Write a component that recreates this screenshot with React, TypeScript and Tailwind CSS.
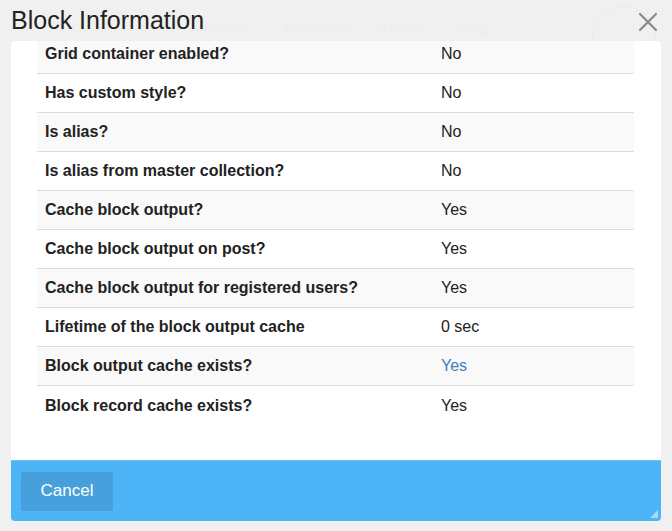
type Row = { label: string; value: string; link?: boolean };

const rows: Row[] = [
  { label: "Grid container enabled?", value: "No" },
  { label: "Has custom style?", value: "No" },
  { label: "Is alias?", value: "No" },
  { label: "Is alias from master collection?", value: "No" },
  { label: "Cache block output?", value: "Yes" },
  { label: "Cache block output on post?", value: "Yes" },
  { label: "Cache block output for registered users?", value: "Yes" },
  { label: "Lifetime of the block output cache", value: "0 sec" },
  { label: "Block output cache exists?", value: "Yes", link: true },
  { label: "Block record cache exists?", value: "Yes" },
];

export default function App() {
  return (
    <div
      className="relative w-[672px] h-[531px] overflow-hidden bg-[#f0f0f0] text-[#222]"
      style={{ fontFamily: '"Liberation Sans", Arial, sans-serif' }}
    >
      {/* faint page behind the dialog */}
      <div
        className="absolute top-[16px] left-0 w-full text-[15px] font-bold text-[#eceef1]"
        style={{ fontFamily: '"Open Sans", sans-serif' }}
      >
        <span className="absolute left-[186px]">Services</span>
        <span className="absolute left-[283px]">Portfolio</span>
        <span className="absolute left-[380px]">Team</span>
        <span className="absolute left-[455px]">Blog</span>
      </div>
      <div className="absolute left-[592px] top-[6px] w-[64px] h-[64px] rounded-full border border-[#ececec]" />

      <div className="relative flex flex-col h-full px-[11px] pb-[10px]">
        <div className="h-[41px] flex items-start justify-between">
          <h1 className="text-[25px] leading-none mt-[8px] text-[#222]">Block Information</h1>
          <svg className="mt-[13px] mr-[4px]" width="18" height="18" viewBox="0 0 18 18">
            <path d="M1 1 L17 17 M17 1 L1 17" stroke="#8a8a8a" strokeWidth="2.2" strokeLinecap="round" />
          </svg>
        </div>

        <div className="flex-1 flex flex-col bg-white rounded-[4px] overflow-hidden">
          <div className="flex-1 overflow-hidden px-[26px]">
            <div className="mt-[-6px] w-[597px]">
              {rows.map((r, i) => (
                <div
                  key={r.label}
                  className={`grid grid-cols-[396px_1fr] h-[39px] items-center text-[16px] ${
                    i % 2 === 0 ? "bg-[#f9f9f9]" : "bg-white"
                  } ${i < rows.length - 1 ? "border-b border-[#dddddd]" : ""}`}
                >
                  <div className="px-2 font-bold">{r.label}</div>
                  <div className={`px-2 ${r.link ? "text-[#3f7fc0]" : ""}`}>{r.value}</div>
                </div>
              ))}
            </div>
          </div>

          <div className="relative h-[61px] bg-[#4db4f8] border-t border-[#6cc2fa] flex items-center px-[10px]">
            <button className="w-[92px] h-[39px] rounded-[2px] bg-[#479fdb] text-white text-[17px]">
              Cancel
            </button>
            <svg className="absolute right-[3px] bottom-[3px]" width="8" height="8" viewBox="0 0 8 8">
              <path d="M8 0 L8 8 L0 8 Z" fill="#a9d9fb" />
            </svg>
          </div>
        </div>
      </div>
    </div>
  );
}
